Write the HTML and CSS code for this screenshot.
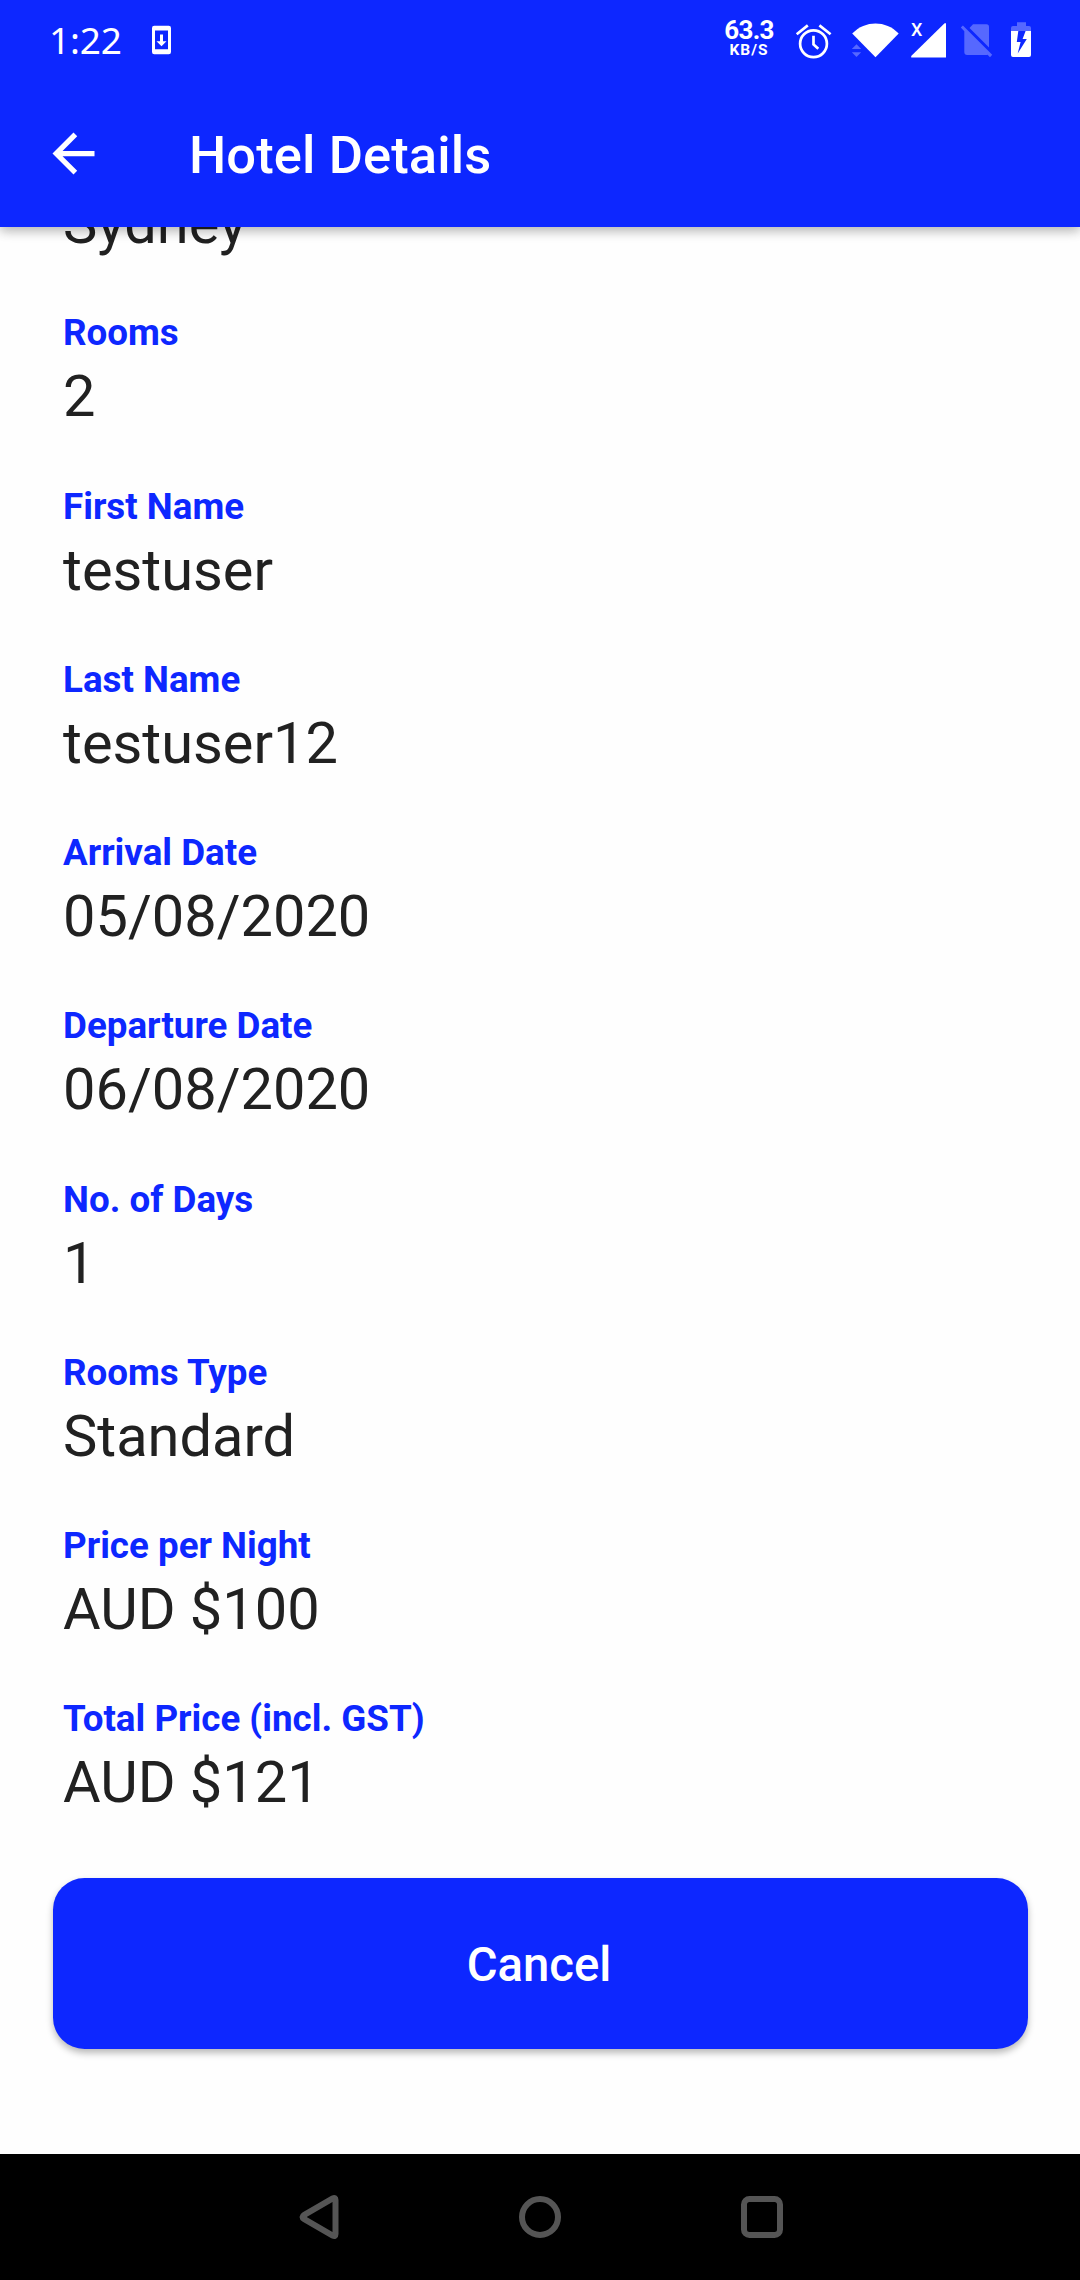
FILE: index.html
```html
<!DOCTYPE html>
<html lang="en">
<head>
<meta charset="utf-8">
<title>Hotel Details</title>
<link rel="stylesheet" href="styles.css">
</head>
<body>
<div class="screen">
  <header class="header">
    <div class="status">
      <div class="status-left">
        <span class="clock">1:22</span>
        <svg class="icon-phone" width="20" height="30" viewBox="0 0 20 30">
          <path fill="#fff" fill-rule="evenodd" d="M2.3 .7H16.7Q19 .7 19 3V27Q19 29.3 16.7 29.3H2.3Q0 29.3 0 27V3Q0 .7 2.3 .7ZM3 5.5V24.3H16V5.5ZM8 9.5H11V16.2H14.5L9.5 21.2L4.5 16.2H8Z"/>
        </svg>
      </div>
      <div class="speed"><span class="speed-value">63.3</span><span class="speed-unit">KB/S</span></div>
      <svg class="status-icons" width="240" height="40" viewBox="795 20 240 40">
        <g fill="none" stroke="#fff" stroke-width="2.7">
          <circle cx="813.5" cy="43.7" r="13.4"/>
          <path d="M796.7 34.3L807.8 25.4M819.4 25.4L830.6 34.3M813.5 35.8V44.4L818.3 48.8"/>
        </g>
        <path fill="#fff" d="M875.5 57.3L852.2 33.6C859 26.7 867 23.5 875.5 23.5S892 26.7 898.7 33.6Z"/>
        <path fill="#fff" fill-opacity=".3" d="M851.8 49L856.5 44.2L861.2 49ZM851.8 52.2H861.2L856.5 57Z"/>
        <text class="no-service" x="911" y="36">X</text>
        <path fill="#fff" d="M911.2 57.5V56L944.6 23.2H946V57.5Z"/>
        <g fill="#fff" fill-opacity=".3">
          <path d="M973 24.2H986.5Q989 24.2 989 26.8V47.5L969.5 28Z"/>
          <path d="M960.8 27.6L962.9 25.5L992.2 54.8L990 57.2L987.6 54.8Q987 55 986 55H967.2Q964.3 55 964.3 52V31.3Z"/>
          <path d="M1017 26V22.2H1026V26H1029Q1031 26 1031 28V31H1011V28Q1011 26 1013 26Z"/>
        </g>
        <path fill="#fff" fill-rule="evenodd" d="M1011 31H1031V55Q1031 57 1029 57H1013Q1011 57 1011 55ZM1018.3 31L1016.8 42H1020.6L1017.7 53.5L1026.8 39H1022.6L1025.6 31Z"/>
      </svg>
    </div>
    <div class="appbar">
      <svg class="back" width="63" height="63" viewBox="0 0 24 24"><path fill="#fff" d="M20 11H7.83l5.59-5.59L12 4l-8 8 8 8 1.41-1.41L7.83 13H20z"/></svg>
      <h1 class="title">Hotel Details</h1>
    </div>
  </header>
  <main class="content">
    <div class="fields">
      <div class="field field-first"><div class="value">Sydney</div></div>
      <div class="field"><div class="label">Rooms</div><div class="value">2</div></div>
      <div class="field"><div class="label">First Name</div><div class="value">testuser</div></div>
      <div class="field"><div class="label">Last Name</div><div class="value">testuser12</div></div>
      <div class="field"><div class="label">Arrival Date</div><div class="value">05/08/2020</div></div>
      <div class="field"><div class="label">Departure Date</div><div class="value">06/08/2020</div></div>
      <div class="field"><div class="label">No. of Days</div><div class="value">1</div></div>
      <div class="field"><div class="label">Rooms Type</div><div class="value">Standard</div></div>
      <div class="field"><div class="label">Price per Night</div><div class="value">AUD $100</div></div>
      <div class="field"><div class="label">Total Price (incl. GST)</div><div class="value">AUD $121</div></div>
    </div>
    <button class="cancel">Cancel</button>
  </main>
  <nav class="navbar">
    <svg width="42" height="46" viewBox="0 0 42 46"><path d="M7.3 20.8L35.7 4.4Q38.5 3 38.5 6V40Q38.5 43 35.7 41.6L7.3 25.2Q3.7 23 7.3 20.8Z"/></svg>
    <svg width="42" height="46" viewBox="0 0 42 46"><circle cx="21" cy="23" r="18"/></svg>
    <svg width="42" height="46" viewBox="0 0 42 46"><rect x="3" y="5" width="36" height="36" rx="5.5"/></svg>
  </nav>
</div>
</body>
</html>
```
FILE: styles.css
```css
* {
  box-sizing: border-box;
}

body {
  margin: 0;
  font-family: Roboto, sans-serif;
}

.screen {
  display: flex;
  flex-direction: column;
  width: 1080px;
  height: 2280px;
  overflow: hidden;
  background: #fefefe;
}

.header {
  position: relative;
  z-index: 1;
  flex: none;
  height: 227px;
  background: #0d27ff;
  color: #fff;
  box-shadow: 0 4px 10px rgba(0, 0, 0, 0.2), 0 2px 14px rgba(0, 0, 0, 0.14);
}

.status {
  display: flex;
  align-items: center;
  height: 80px;
  padding-left: 49px;
}

.status-left {
  display: flex;
  align-items: center;
  gap: 28px;
  width: 675px;
}

.clock {
  width: 75px;
  font: 400 37px/44px "Noto Sans", sans-serif;
  letter-spacing: -0.2px;
}

.speed {
  display: flex;
  flex-direction: column;
  align-items: center;
  width: 50px;
  padding-bottom: 4px;
  font-weight: 700;
}

.speed-value {
  font-size: 26px;
  line-height: 24px;
  letter-spacing: -0.7px;
}

.speed-unit {
  font-size: 15.5px;
  line-height: 16px;
  letter-spacing: 1px;
}

.status-icons {
  margin-left: 21px;
}

.no-service {
  font: 500 18px Roboto, sans-serif;
  fill: #fff;
}

.appbar {
  display: flex;
  align-items: center;
  height: 147px;
  padding-left: 42px;
  gap: 84px;
}

.title {
  margin: 3px 0 0;
  font-size: 52.5px;
  font-weight: 500;
  line-height: 62px;
  letter-spacing: 0.1px;
}

.content {
  flex: 1;
  min-height: 0;
  overflow: hidden;
}

/* The list is scrolled so that its first entry sits partly under the app bar. */
.fields {
  margin-top: -37.85px;
  padding-left: 63px;
}

.field {
  height: 173.25px;
}

.field-first {
  height: 122.25px;
}

.label {
  color: #0d27ff;
  font-size: 36.75px;
  font-weight: 700;
  line-height: 43px;
}

.value {
  margin-top: 8px;
  color: #212121;
  font-size: 57.75px;
  line-height: 68px;
}

.field-first .value {
  margin-top: 0;
}

.cancel {
  display: block;
  width: 975px;
  height: 170.6px;
  margin: 7.7px 52.5px 0;
  padding: 2px 2px 0 0;
  border: 0;
  border-radius: 31.5px;
  background: #0d27ff;
  color: #fff;
  font: 500 47.25px Roboto, sans-serif;
  box-shadow: 0 4px 7px rgba(0, 0, 0, 0.28);
}

.navbar {
  display: flex;
  align-items: center;
  justify-content: center;
  gap: 180px;
  flex: none;
  height: 126px;
  background: #000;
}

.navbar svg {
  fill: none;
  stroke: #555;
  stroke-width: 6;
}
```
